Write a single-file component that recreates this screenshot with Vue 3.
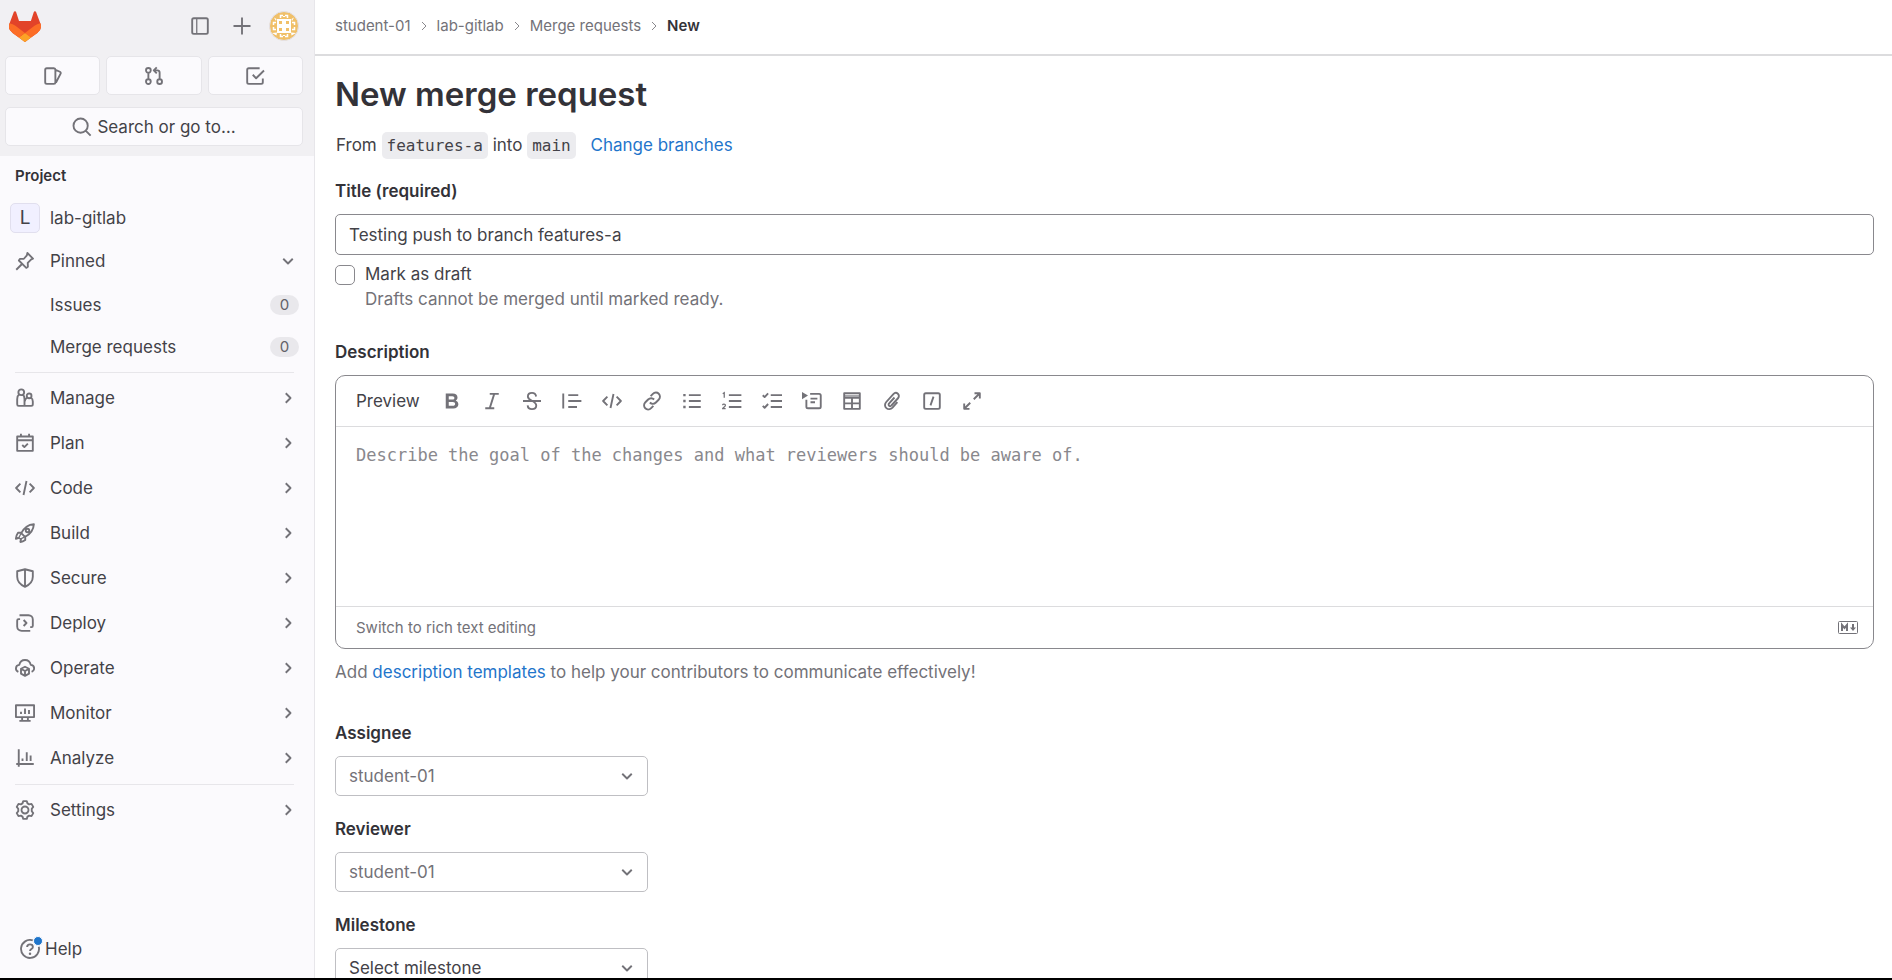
<script setup>
import { h, ref } from 'vue'

const glyphs = {
  panel: { s: 'M3 1.75h10c.7 0 1.25.55 1.25 1.25v10c0 .7-.55 1.25-1.25 1.25H3c-.7 0-1.25-.55-1.25-1.25V3c0-.7.55-1.25 1.25-1.25Z', t: 'M5.4 2v12' },
  plus: { s: 'M8 1.2v13.6M1.2 8h13.6' },
  issues: { s: 'M3 1.75h5.7c.7 0 1.2.55 1.2 1.25v10c0 .7-.5 1.25-1.2 1.25H3c-.7 0-1.25-.55-1.25-1.25V3c0-.7.55-1.25 1.25-1.25ZM10 3.1l3.5 1.5c.6.25.9.9.6 1.5L10.3 13.4' },
  merge: { s: 'M3.5 5.4v5.2M5.4 3.5a1.9 1.9 0 1 1-3.8 0a1.9 1.9 0 0 1 3.8 0ZM5.4 12.5a1.9 1.9 0 1 1-3.8 0a1.9 1.9 0 0 1 3.8 0ZM14.4 12.5a1.9 1.9 0 1 1-3.8 0a1.9 1.9 0 0 1 3.8 0ZM12.5 10.6V5.2c0-1-.7-1.7-1.7-1.7H8.2M10.2 1.1L7.8 3.5l2.4 2.4' },
  todo: { s: 'M11.7 1.75H3c-.7 0-1.25.55-1.25 1.25v10c0 .7.55 1.25 1.25 1.25h10c.7 0 1.25-.55 1.25-1.25V10M6.2 7l2.7 2.8L15.2 3.6' },
  search: { s: 'M12.6 6.9a5.7 5.7 0 1 1-11.4 0a5.7 5.7 0 0 1 11.4 0ZM11.1 11.1l3.8 3.8' },
  pin: { s: 'M1 15l4.6-4.6M9.9 1.6l4.5 4.5-1.4.6-2.8 2.8.1 3.1-1.3.9L3.1 7.6l.8-1.3 3.2-.1 2.4-2.7ZM4.8 9.3l2 2' },
  manage: { s: 'M7.3 3.4a2.3 2.3 0 1 1-4.6 0a2.3 2.3 0 0 1 4.6 0ZM3.2 5.2C2 6 1.75 7.2 1.75 9v4c0 .7.5 1.25 1.2 1.25H7.6V9c0-1.8-.2-3-1.4-3.8M13.2 6.3a1.9 1.9 0 1 1-3.8 0a1.9 1.9 0 0 1 3.8 0ZM7.8 14.25H13c.7 0 1.25-.55 1.25-1.25v-2.3c0-1.6-.4-2.3-1.5-2.9M9.8 7.8c-1.3.6-2 1.3-2 2.9' },
  plan: { s: 'M1.75 2.75h12.5v11.5H1.75ZM2 5.75h12M4.75.6v2M11.25.6v2M5.8 9.6l1.7 1.7 2.8-2.8' },
  code: { s: 'M4.3 4.5L.9 8l3.4 3.5M11.7 4.5L15.1 8l-3.4 3.5M9.2 2.4L6.8 13.6' },
  build: { s: 'M5 8.1C7 4.2 10 1.3 15.1.9c-.3 5-3.2 8.2-7.1 10.2ZM5.1 7.8H2.4C1.4 9.2.9 10.8.7 12.6l2.5-.8M8.2 10.9v2.7c-1.3.9-2.4 1.4-3.9 1.6l.6-3M11.4 6a1.4 1.4 0 1 1-2.8 0a1.4 1.4 0 0 1 2.800 0Z', t: 'M5.200 8.200c-1.200 1.200-2 3.600-2 3.600l1 1s2.400-.8 3.600-2' },
  secure: { s: 'M8 1L14.25 2.6V7c0 3.8-2.6 6.4-6.25 8.1C4.4 13.4 1.75 10.8 1.75 7V2.6ZM8 1v14' },
  deploy: { s: 'M3.6 1.75h7.2c2 0 3.45 1.5 3.45 3.4v5.1c0 .6-.4 1-1 1h-1.1M12.2 14.25H5.3c-2 0-3.55-1.5-3.55-3.4V6c0-.7.5-1.1 1.1-1.1h1.2M6.9 5.6L9.2 8l-2.3 2.4' },
  operate: { s: 'M2.7 11.1C1.5 10.6.75 9.6.75 8.4c0-1.6 1.2-2.8 2.7-2.9C3.9 3.2 5.7 1.6 8 1.6s4.1 1.6 4.6 3.9c1.5.1 2.7 1.3 2.7 2.9 0 1.2-.8 2.2-2 2.7M8 7l3.2 1.6v3.9L8 14.3l-3.2-1.8V8.6ZM4.8 8.7L8 10.4l3.2-1.7M8 10.4v3.8' },
  monitor: { s: 'M.75 1.75h14.5v9.5H.75ZM5.7 11.3v2.5M10.3 11.3v2.5M3.5 14.25h9M4.8 7v1.7M8 4.3v4.4M11.2 5.5v3.2' },
  analyze: { s: 'M3 1v14M1 12.75h14M6 8.3v2M9.4 3.3v7M12.5 6v4.3' },
  settings: { s: 'M6.6.9h2.8l.6 1.8 1.3.8 1.9-.4 1.4 2.4-1.2 1.5v2l1.2 1.5-1.4 2.4-1.9-.4-1.3.8-.6 1.8H6.6L6 13.3l-1.3-.8-1.9.4-1.4-2.4L2.6 9V7L1.4 5.5l1.4-2.4 1.9.4L6 2.7ZM10.8 8a2.8 2.8 0 1 1-5.6 0a2.8 2.8 0 0 1 5.6 0Z' },
  right: { s: 'M6.2 4.2L10 8l-3.8 3.8' },
  down: { s: 'M4.2 6.2L8 10l3.8-3.8' },
  help: { s: 'M10.2 1.1A7.2 7.2 0 1 0 15 6.2M5.7 6.4c0-1.3 1-2.1 2.3-2.1s2.3.8 2.3 2c0 1.7-2.3 1.7-2.3 3.3', f: 'M7 11.8a1 1 0 1 0 2 0a1 1 0 0 0-2 0Z' },
  bold: { f: 'M3 2h5.6c2.3 0 3.8 1.2 3.8 3.2 0 1.1-.5 2-1.4 2.5 1.3.4 2.1 1.5 2.1 2.9 0 2.1-1.6 3.4-4.1 3.4H3ZM5.4 4.1v2.7h2.9c1 0 1.6-.5 1.6-1.3s-.6-1.4-1.6-1.4ZM5.4 8.8v3h3.3c1.1 0 1.8-.6 1.8-1.5s-.7-1.5-1.8-1.5Z' },
  italic: { s: 'M6.2 2.25h7.2M2.6 13.75h7.2M9.8 2.3L6.2 13.7' },
  strike: { s: 'M.8 8h14.4M11.3 4.4C11 2.5 9.8 1.5 8 1.5S4.7 2.6 4.7 4.3C4.7 8 11.4 7.6 11.4 11.6c0 1.8-1.4 2.9-3.4 2.9s-3.3-1-3.5-3' },
  quote: { s: 'M1 2v12M5 3.25h8M5 8h10.5M5 12.75h7' },
  link: { s: 'M6.9 4.1l1.8-1.8c1.4-1.4 3.4-1.4 4.7-.1s1.3 3.4-.1 4.8l-2.2 2.2c-1.4 1.4-3.5 1.4-4.8 0M9.1 11.9l-1.8 1.8c-1.4 1.4-3.4 1.4-4.7.1s-1.3-3.4.1-4.8l2.2-2.2c1.4-1.4 3.5-1.4 4.8 0' },
  bullets: { s: 'M5.5 3.25H15M5.5 8H15M5.5 12.75H15', f: 'M1 2.3h1.9v1.9H1ZM1 7.05h1.9v1.9H1ZM1 11.8h1.9v1.9H1Z' },
  numbers: { s: 'M5.5 3.25h10M5.5 8h10M5.5 12.75h10', t: 'M.6 2.2l1.2-.8v4M.4 11.4c.2-1.3 2.4-1.2 2.3.1 0 .9-1.5 1.6-2.2 2.6h2.4' },
  tasks: { s: 'M7 3.25h9M7 8h9M7 12.75h9M.6 3.4l1.5 1.5 2.8-3M.6 11.9l1.5 1.5 2.8-3' },
  collapse: { s: 'M6.5 2.25h7.2c.7 0 1.3.5 1.3 1.25v9c0 .7-.6 1.25-1.3 1.25H4.8c-.7 0-1.3-.5-1.3-1.25V7M6.8 6.1h5.5M6.8 9h3.6', f: 'M0 .8L4.8 3.6 0 6.6Z' },
  table: { s: 'M1.75 1.75h12.5v12.5H1.75ZM2 5.5h12M2 9.9h12M8 5.5V14', t: 'M2 4h12' },
  clip: { s: 'M12.3 8.9l-3.9 4.4c-1.4 1.5-3.5 1.6-4.9.4s-1.5-3.3-.1-4.9l5.700-6.300c1-1.100 2.600-1.200 3.600-.3s1.100 2.500.1 3.600l-5.300 5.800c-.5.6-1.300.6-1.800.2s-.6-1.300 0-1.900l4.300-4.700' },
  slash: { s: 'M3 1.75h10c.7 0 1.25.55 1.25 1.25v10c0 .7-.55 1.25-1.25 1.25H3c-.7 0-1.25-.55-1.25-1.25V3c0-.7.55-1.25 1.25-1.25ZM9.2 4.5L6.8 11.5' },
  expand: { s: 'M10 1.75h4.25V6M14 2L9.4 6.6M6 14.25H1.75V10M2 14l4.6-4.6' },
}

function Icon({ name }) {
  const g = glyphs[name]
  return h('svg', { class: 'icon', viewBox: '0 0 16 16', 'aria-hidden': 'true' }, [
    g.s && h('path', { d: g.s, fill: 'none', stroke: 'currentColor', 'stroke-width': 1.5, 'stroke-linejoin': 'round' }),
    g.t && h('path', { d: g.t, fill: 'none', stroke: 'currentColor', 'stroke-width': 1 }),
    g.f && h('path', { d: g.f, fill: 'currentColor', 'fill-rule': 'evenodd' }),
  ])
}
Icon.props = ['name']

const shortcuts = [
  { icon: 'issues', label: 'Assigned issues' },
  { icon: 'merge', label: 'Merge requests' },
  { icon: 'todo', label: 'To-do list' },
]
const pinned = ['Issues', 'Merge requests']
const sections = [
  { icon: 'manage', label: 'Manage' },
  { icon: 'plan', label: 'Plan' },
  { icon: 'code', label: 'Code' },
  { icon: 'build', label: 'Build' },
  { icon: 'secure', label: 'Secure' },
  { icon: 'deploy', label: 'Deploy' },
  { icon: 'operate', label: 'Operate' },
  { icon: 'monitor', label: 'Monitor' },
  { icon: 'analyze', label: 'Analyze' },
]
const crumbs = ['student-01', 'lab-gitlab', 'Merge requests']
const tools = [
  ['bold', 'Bold'], ['italic', 'Italic'], ['strike', 'Strikethrough'], ['quote', 'Quote'],
  ['code', 'Code'], ['link', 'Link'], ['bullets', 'Bullet list'], ['numbers', 'Numbered list'],
  ['tasks', 'Checklist'], ['collapse', 'Collapsible section'], ['table', 'Table'],
  ['clip', 'Attach a file'], ['slash', 'Quick actions'], ['expand', 'Full screen'],
]
const fields = [
  { id: 'assignee', label: 'Assignee', value: 'student-01', muted: true },
  { id: 'reviewer', label: 'Reviewer', value: 'student-01', muted: true },
  { id: 'milestone', label: 'Milestone', value: 'Select milestone', muted: false },
]
const title = ref('Testing push to branch features-a')
const draft = ref(false)
const description = ref('')
</script>

<template>
  <div class="shell">
    <aside class="sidebar">
      <div class="top">
        <div class="brand">
          <a href="#" class="logo" aria-label="Homepage">
            <svg viewBox="0 0 25 24" aria-hidden="true">
              <path fill="#e24329" d="m24.507 9.5-.034-.09L21.082.562a.896.896 0 0 0-1.694.091l-2.29 7.01H7.825L5.535.653a.898.898 0 0 0-1.694-.09L.451 9.411.416 9.5a6.297 6.297 0 0 0 2.09 7.278l.012.01.03.022 5.16 3.867 2.56 1.935 1.554 1.176a1.051 1.051 0 0 0 1.268 0l1.555-1.176 2.56-1.935 5.197-3.89.014-.01A6.297 6.297 0 0 0 24.507 9.5Z" />
              <path fill="#fc6d26" d="m24.507 9.5-.034-.09a11.44 11.44 0 0 0-4.56 2.051l-7.447 5.632 4.742 3.584 5.197-3.89.014-.01A6.297 6.297 0 0 0 24.507 9.5Z" />
              <path fill="#fca326" d="m7.707 20.677 2.56 1.935 1.555 1.176a1.051 1.051 0 0 0 1.268 0l1.555-1.176 2.56-1.935-4.743-3.584-4.755 3.584Z" />
              <path fill="#fc6d26" d="M5.01 11.461a11.43 11.43 0 0 0-4.56-2.05L.416 9.5a6.297 6.297 0 0 0 2.09 7.278l.012.01.03.022 5.16 3.867 4.745-3.584-7.444-5.632Z" />
            </svg>
          </a>
          <div class="brand-actions">
            <button type="button" class="ghost" aria-label="Toggle sidebar"><Icon name="panel" /></button>
            <button type="button" class="ghost" aria-label="Create new"><Icon name="plus" /></button>
            <button type="button" class="ghost user" aria-label="User menu">
              <svg viewBox="0 0 30 30" aria-hidden="true">
                <circle cx="15" cy="15" r="14.5" fill="#f0c069" stroke="#e3e1e8" />
                <path fill="#fff" fill-rule="evenodd" d="M8 8h14v14H8ZM10 10v3h3v-3ZM17 10v3h3v-3ZM10 17v3h3v-3ZM17 17v3h3v-3Z" />
                <path fill="none" stroke="#fff" stroke-width="1.5" d="M11.5 7V4.5h2.5M18.5 7V4.5H16M11.5 23v2.5h2.5M18.5 23v2.5H16M7 11.5H4.5V14M7 18.5H4.5V16M23 11.5h2.5V14M23 18.5h2.5V16" />
                <path fill="#fff" d="M14 5h2v1h-2ZM14 24h2v1h-2ZM5 6.5L7.5 8 7 10ZM25 6.5L22.5 8l.5 2ZM3 22l5-.5-.5 3ZM27 22l-5-.5.5 3Z" />
              </svg>
            </button>
          </div>
        </div>
        <div class="shortcuts">
          <a v-for="s in shortcuts" :key="s.label" href="#" class="tile" :aria-label="s.label"><Icon :name="s.icon" /></a>
        </div>
        <button type="button" class="tile search"><Icon name="search" />Search or go to…</button>
      </div>

      <nav class="nav" aria-label="Project">
        <h2 class="context">Project</h2>
        <a href="#" class="row project"><span class="letter">L</span><span class="name">lab-gitlab</span></a>
        <button type="button" class="row"><Icon name="pin" /><span class="name">Pinned</span><Icon name="down" class="chev" /></button>
        <div class="pinned">
          <a v-for="p in pinned" :key="p" href="#" class="row sub"><span class="name">{{ p }}</span><span class="badge">0</span></a>
        </div>
        <hr class="rule" />
        <button v-for="s in sections" :key="s.label" type="button" class="row">
          <Icon :name="s.icon" /><span class="name">{{ s.label }}</span><Icon name="right" class="chev" />
        </button>
        <hr class="rule" />
        <button type="button" class="row"><Icon name="settings" /><span class="name">Settings</span><Icon name="right" class="chev" /></button>
      </nav>

      <button type="button" class="help"><span class="help-icon"><Icon name="help" /><i class="dot"></i></span>Help</button>
    </aside>

    <div class="page">
      <nav class="crumbs" aria-label="Breadcrumb">
        <template v-for="c in crumbs" :key="c">
          <a href="#">{{ c }}</a>
          <svg class="sep" viewBox="0 0 10 10" aria-hidden="true"><path d="M3 1l4 4-4 4" fill="none" stroke="currentColor" /></svg>
        </template>
        <a href="#" class="current" aria-current="page">New</a>
      </nav>

      <main class="content">
        <h1>New merge request</h1>
        <p class="branches">From <code>features-a</code> into <code>main</code> <a href="#">Change branches</a></p>

        <form @submit.prevent>
          <label class="label" for="title">Title (required)</label>
          <input id="title" v-model="title" class="text" type="text" />
          <div class="draft">
            <input id="draft" v-model="draft" type="checkbox" aria-describedby="draft-help" />
            <label for="draft">Mark as draft</label>
            <p id="draft-help">Drafts cannot be merged until marked ready.</p>
          </div>

          <label class="label" for="description">Description</label>
          <div class="editor">
            <div class="toolbar">
              <button type="button" class="preview">Preview</button>
              <button v-for="[icon, label] in tools" :key="icon" type="button" class="tool" :aria-label="label"><Icon :name="icon" /></button>
            </div>
            <textarea id="description" v-model="description" placeholder="Describe the goal of the changes and what reviewers should be aware of."></textarea>
            <div class="foot">
              <button type="button" class="switch">Switch to rich text editing</button>
              <a href="#" class="md" aria-label="Markdown is supported">
                <svg viewBox="0 0 20 13" aria-hidden="true">
                  <rect x=".5" y=".5" width="19" height="12" rx="1" fill="none" stroke="currentColor" />
                  <path d="M4 10V4l2.5 3L9 4v6" fill="none" stroke="currentColor" stroke-width="2" />
                  <path d="M14 3h2v3.5h2L15 10l-3-3.5h2Z" fill="currentColor" />
                </svg>
              </a>
            </div>
          </div>
          <p class="hint">Add <a href="#">description templates</a> to help your contributors to communicate effectively!</p>

          <div v-for="f in fields" :key="f.id" class="field">
            <label class="label" :for="f.id">{{ f.label }}</label>
            <div class="pick">
              <select :id="f.id" :class="{ muted: f.muted }"><option>{{ f.value }}</option></select>
              <Icon name="down" />
            </div>
          </div>
        </form>
      </main>
    </div>
  </div>
</template>

<style>
body { background: #fff; overflow: hidden; }
</style>

<style scoped>
* { box-sizing: border-box; }
.shell {
  display: flex;
  height: 100vh;
  overflow: hidden;
  border-bottom: 2px solid #000;
  font: 17px/24px Inter, "Noto Sans", sans-serif;
  color: #434248;
}
button, input, select, textarea { font: inherit; color: inherit; margin: 0; }
button { border: 0; background: none; padding: 0; cursor: pointer; }
a { color: #1f75cb; text-decoration: none; }
h1, h2, p { margin: 0; }
.icon { width: 20px; height: 20px; flex: none; color: #737278; display: block; }

.sidebar {
  width: 315px;
  flex: none;
  display: flex;
  flex-direction: column;
  background: #fbfafd;
  border-right: 1px solid #e7e6ea;
}
.top { background: #f1f0f3; padding: 6px 11px 10px 5px; }
.brand { display: flex; justify-content: space-between; align-items: center; height: 40px; padding: 0 4px; }
.logo svg { display: block; width: 32px; height: 31px; }
.brand-actions { display: flex; align-items: center; gap: 12px; }
.ghost { width: 30px; height: 30px; display: grid; place-items: center; }
.user svg { width: 30px; height: 30px; display: block; }
.shortcuts { display: grid; grid-template-columns: repeat(3, 1fr); gap: 6px; margin: 10px 0 12px; }
.tile {
  height: 39px;
  display: flex;
  align-items: center;
  justify-content: center;
  gap: 5px;
  background: #fbfafd;
  border: 1px solid #e6e5e9;
  border-radius: 5px;
}
.search { width: 100%; }

.nav { flex: 1; padding: 10px 10px 0; }
.context { font-size: 15px; line-height: 20px; font-weight: 600; padding-left: 5px; color: #333238; }
.row {
  width: 100%;
  height: 45px;
  display: flex;
  align-items: center;
  gap: 15px;
  padding: 0 10px 0 5px;
  color: #434248;
  text-align: left;
}
.row .name { flex: 1; }
.chev { margin-right: -4px; }
.project { gap: 10px; padding-left: 0; height: 40px; margin-top: 12px; }
.letter {
  width: 30px;
  height: 30px;
  display: grid;
  place-items: center;
  background: #f1f0ff;
  border: 1px solid #e1dfee;
  border-radius: 5px;
  font-size: 19px;
}
.pinned { margin-top: 1px; }
.sub { height: 42px; padding: 0 5px 0 40px; }
.badge {
  background: #e9e8ec;
  border-radius: 10px;
  width: 29px;
  font-size: 15px;
  line-height: 20px;
  text-align: center;
  color: #626168;
}
.rule { border: 0; height: 1px; background: #e7e6ea; margin: 4px 10px 2px 5px; }
.help { display: flex; align-items: center; gap: 5px; align-self: flex-start; height: 40px; margin: 0 20px 9px; }
.help-icon { position: relative; }
.dot { position: absolute; top: -3px; right: -3px; width: 8px; height: 8px; border-radius: 50%; background: #1f75cb; border: 1px solid #fbfafd; box-sizing: content-box; }

.page { flex: 1; min-width: 0; background: #fff; }
.crumbs {
  height: 56px;
  display: flex;
  align-items: center;
  padding: 0 20px 2px;
  border-bottom: 2px solid #dcdcde;
  font-size: 15px;
  line-height: 20px;
}
.crumbs a { color: #737278; }
.crumbs .current { color: #333238; font-weight: 600; }
.sep { width: 10px; height: 10px; margin: 0 8px; color: #89888d; }

.content { padding: 16px 18px 0 20px; }
h1 { font-size: 33px; line-height: 44px; font-weight: 600; color: #333238; }
.branches { margin-top: 16px; padding-left: 1px; line-height: 26px; }
code {
  font: 16px/24px "DejaVu Sans Mono", monospace;
  background: #ececef;
  border-radius: 5px;
  padding: 4px 5px;
}
.branches a { margin-left: 10px; }
.label { display: block; font-weight: 600; color: #333238; line-height: 24px; }
form { margin-top: 21px; }
.text {
  display: block;
  width: 100%;
  height: 41px;
  margin-top: 11px;
  padding: 0 13px;
  border: 1px solid #89888d;
  border-radius: 5px;
  background: #fff;
}
.draft {
  display: grid;
  grid-template-columns: 20px 1fr;
  column-gap: 10px;
  align-items: center;
  margin: 7px 0 28px;
  line-height: 25px;
}
.draft input { appearance: none; width: 20px; height: 20px; border: 1px solid #89888d; border-radius: 5px; }
.draft p { grid-column: 2; color: #737278; }
.editor { margin-top: 11px; border: 1px solid #89888d; border-radius: 10px; }
.toolbar { display: flex; align-items: center; height: 51px; padding: 0 15px; border-bottom: 1px solid #dcdcde; }
.preview { padding: 0 12px 0 5px; }
.tool { width: 40px; height: 40px; display: grid; place-items: center; }
textarea {
  display: block;
  width: 100%;
  height: 179px;
  border: 0;
  outline: 0;
  resize: none;
  background: none;
  padding: 16px 20px;
  font: 17px/24px "DejaVu Sans Mono", monospace;
}
textarea::placeholder { color: #89888d; opacity: 1; }
.foot {
  display: flex;
  align-items: center;
  justify-content: space-between;
  height: 42px;
  padding: 0 15px 0 20px;
  border-top: 1px solid #dcdcde;
}
.switch { font-size: 15px; color: #737278; }
.md { color: #737278; }
.md svg { display: block; width: 20px; height: 13px; }
.hint { margin: 11px 0 37px; color: #737278; }
.field { margin-bottom: 21px; }
.pick { display: grid; width: 313px; margin-top: 11px; align-items: center; }
.pick select {
  grid-area: 1 / 1;
  appearance: none;
  height: 40px;
  padding: 0 13px;
  border: 1px solid #bfbfc3;
  border-radius: 5px;
  background: #fff;
}
.pick .muted { color: #737278; }
.pick .icon { grid-area: 1 / 1; justify-self: end; margin-right: 11px; pointer-events: none; }
</style>
